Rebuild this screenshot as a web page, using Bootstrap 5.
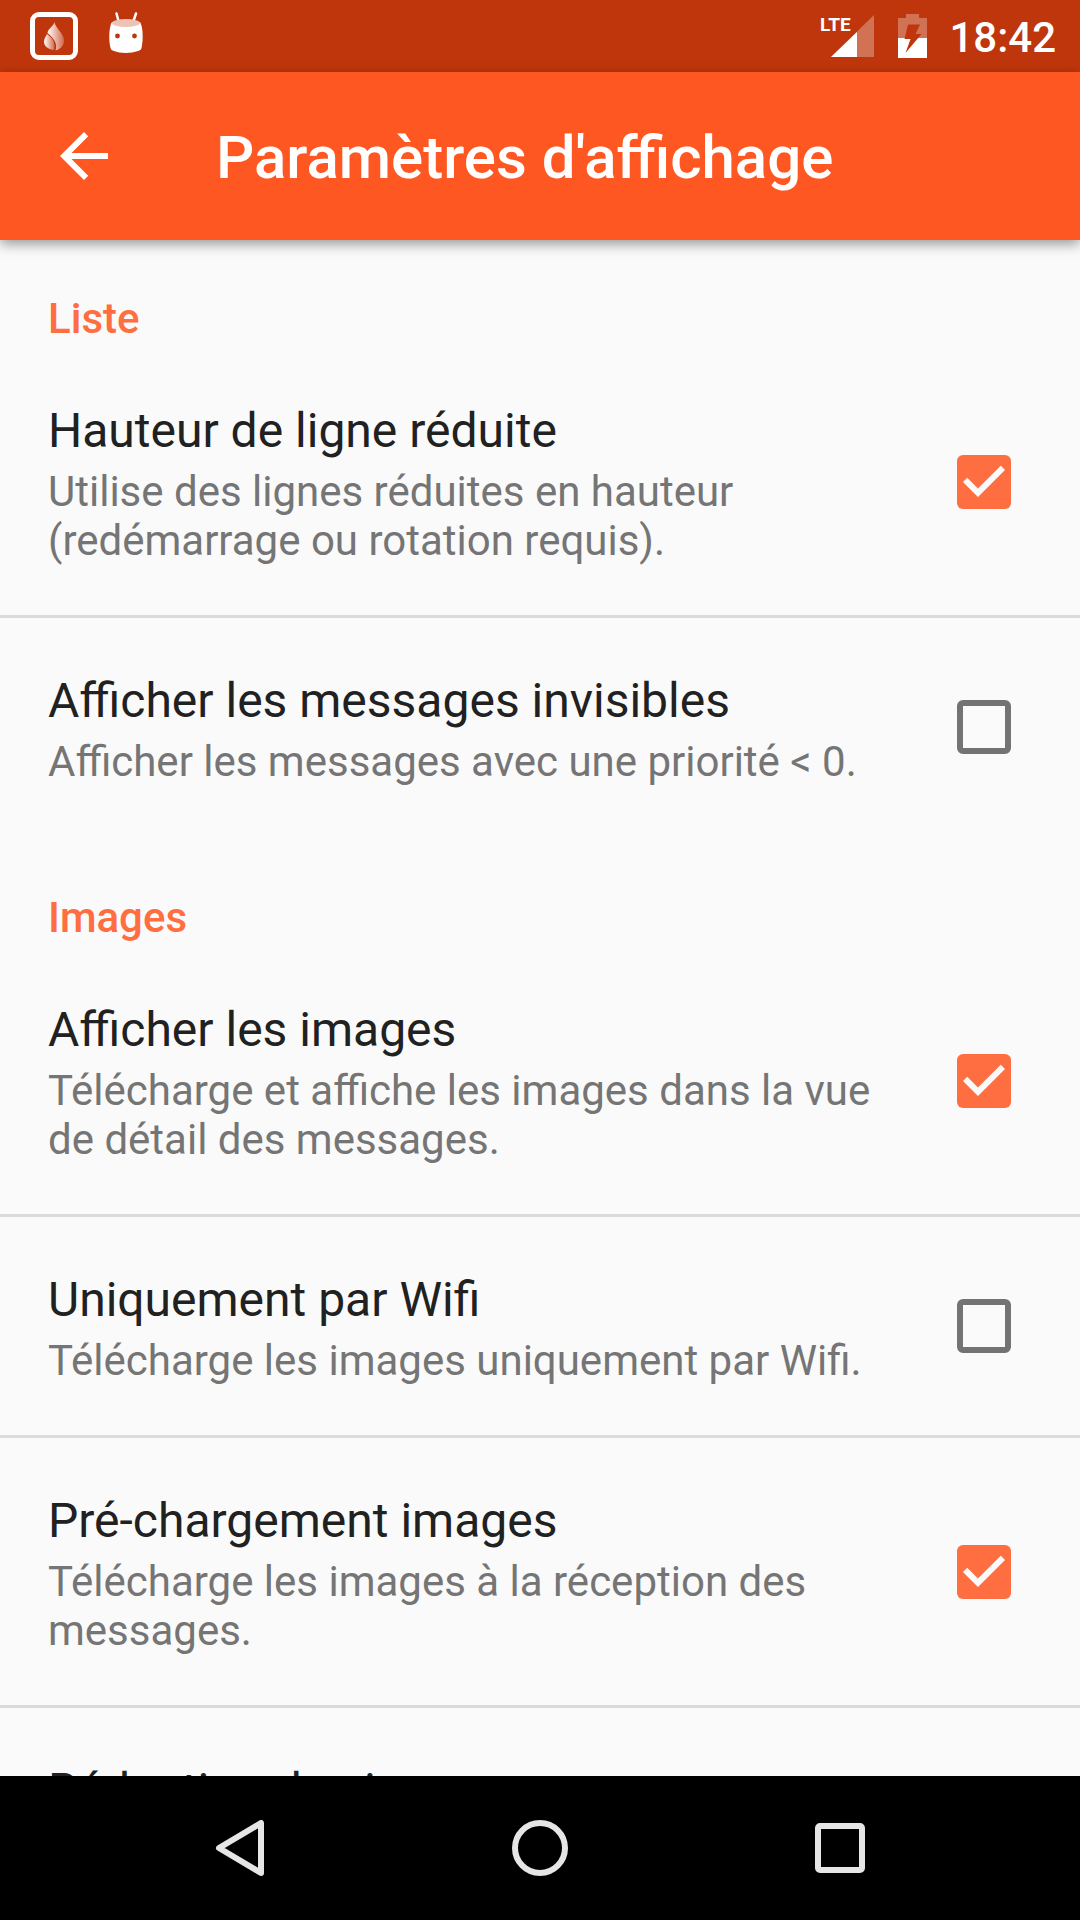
<!DOCTYPE html>
<html lang="fr">
<head>
<meta charset="utf-8">
<meta name="viewport" content="width=device-width, initial-scale=1">
<title>Paramètres d'affichage</title>
<link href="https://cdn.jsdelivr.net/npm/bootstrap@5.3.0/dist/css/bootstrap.min.css" rel="stylesheet">
<style>
  :root { --accent: #ff6e40; --ink: #212121; --ink-soft: #757575; }
  body { font-family: Roboto, "Liberation Sans", sans-serif; background: #fafafa; color: var(--ink); }
  svg { display: block; flex: none; }

  .status-bar { background: #bf360c; height: 72px; padding: 0 24px 0 30px; color: #fff; }
  .status-left { gap: 30px; }
  .status-right { gap: 22px; }
  .status-time { font-size: 42px; line-height: 48px; font-weight: 500; padding-top: 4px; }

  .app-bar { background: #ff5722; height: 168px; padding: 0 48px; gap: 96px; box-shadow: 0 4px 12px rgba(0, 0, 0, .4); }
  .app-title { font-size: 60px; line-height: 72px; font-weight: 500; padding-top: 4px; }

  .settings { scrollbar-width: none; }
  .settings::-webkit-scrollbar { display: none; }
  .group-title { font-size: 42px; line-height: 49px; font-weight: 500; color: var(--accent); padding: 54px 48px 5px; }
  .group + .group { padding-top: 3px; }
  .setting { padding: 50px 69px 50px 48px; gap: 72px; cursor: pointer; }
  .setting + .setting { border-top: 3px solid #dbdbdb; }
  .setting-name { font-size: 48px; line-height: 57px; padding-top: 4px; }
  .setting-note { font-size: 42px; line-height: 49px; color: var(--ink-soft); margin-top: 8px; }
  .setting .form-check-input { width: 54px; height: 54px; border: 6px solid #737373; border-radius: 6px; background-color: transparent; }
  .setting .form-check-input:checked {
    border: 0; background-color: var(--accent); background-size: 100% 100%;
    background-image: url("data:image/svg+xml,%3csvg xmlns='http://www.w3.org/2000/svg' viewBox='3 3 18 18'%3e%3cpath fill='%23fafafa' d='M10 17l-5-5 1.41-1.41L10 14.17l7.59-7.59L19 8z'/%3e%3c/svg%3e");
  }

  .nav-keys { background: #000; height: 144px; }
  .nav-key { flex: 0 1 300px; }
</style>
<script src="https://cdn.jsdelivr.net/npm/bootstrap@5.3.0/dist/js/bootstrap.bundle.min.js" defer></script>
</head>
<body class="vh-100 d-flex flex-column overflow-hidden">

<div class="status-bar d-flex align-items-center justify-content-between flex-shrink-0">
  <div class="status-left d-flex align-items-center">
    <svg width="48" height="48" viewBox="0 0 48 48" aria-hidden="true">
      <defs>
        <linearGradient id="flame" x1="0" y1="0" x2="1" y2="0">
          <stop offset="0" stop-color="#fff"/><stop offset="1" stop-color="#d2694a"/>
        </linearGradient>
      </defs>
      <rect x="2.5" y="2.5" width="43" height="43" rx="6.5" fill="none" stroke="#fff" stroke-width="5"/>
      <path fill="url(#flame)" d="M24.500 10C25 16 34 21 34 28.500C34 34 30 37.500 25.500 38.500C27.500 32 25 27.500 17.500 21C18 16.500 23.500 14.500 24.500 10Z"/>
      <path fill="url(#flame)" d="M17 22C22 26 26 30 24 38C18 37.500 14 34 14 29.500C14 26.500 16 24.500 17 22Z"/>
    </svg>
    <svg width="36" height="48" viewBox="0 0 36 48" aria-hidden="true">
      <path d="M8.500 1.500L10.500 9M28 1.500L25.500 9" stroke="#fff" stroke-width="2.500" stroke-linecap="round"/>
      <path fill="#fff" d="M4 10H32C35 14 35.500 28 33.500 36C33 38 32 38.500 30 39C23 41.500 12 41.500 6 39C4 38.500 3 38 2.500 36C.5 28 1 14 4 10Z"/>
      <ellipse cx="18" cy="11" rx="14" ry="4" fill="#ecc3b6"/>
      <circle cx="9.500" cy="24" r="2.400" fill="#bf360c"/><circle cx="26.500" cy="24" r="2.400" fill="#bf360c"/>
    </svg>
  </div>
  <div class="status-right d-flex align-items-center">
    <svg width="56" height="48" viewBox="0 0 56 48" role="img" aria-label="Réseau LTE">
      <path d="M54 3V45H11Z" fill="#fff" fill-opacity=".3"/>
      <path d="M37 20V45H11Z" fill="#fff"/>
      <text x="0" y="19" font-size="19" font-weight="700" fill="#fff">LTE</text>
    </svg>
    <svg width="29" height="48" viewBox="0 0 29 48" role="img" aria-label="Batterie en charge">
      <path fill="#fff" fill-opacity=".3" d="M8 2H21V6H29V26H0V6H8Z"/>
      <path fill="#fff" d="M0 26H29V46H0Z"/>
      <path fill="#bf360c" d="M10 12.500H22L17.500 22H23.500L7.500 41L12.500 27H6.500Z"/>
    </svg>
    <span class="status-time">18:42</span>
  </div>
</div>

<header class="app-bar d-flex align-items-center flex-shrink-0 position-relative z-1">
  <button type="button" class="btn p-0 border-0" aria-label="Retour">
    <svg width="72" height="72" viewBox="0 0 24 24" fill="#fff"><path d="M20 11H7.830l5.590-5.590L12 4l-8 8 8 8 1.410-1.410L7.830 13H20z"/></svg>
  </button>
  <h1 class="app-title text-white m-0">Paramètres d'affichage</h1>
</header>

<main class="settings flex-grow-1 overflow-auto">
  <section class="group">
    <h2 class="group-title m-0">Liste</h2>
    <label class="setting d-flex align-items-center" for="compact">
      <span class="flex-grow-1"><span class="setting-name d-block">Hauteur de ligne réduite</span>
      <span class="setting-note d-block">Utilise des lignes réduites en hauteur (redémarrage ou rotation requis).</span></span>
      <input class="form-check-input flex-shrink-0 m-0" type="checkbox" id="compact" checked>
    </label>
    <label class="setting d-flex align-items-center" for="hidden-messages">
      <span class="flex-grow-1"><span class="setting-name d-block">Afficher les messages invisibles</span>
      <span class="setting-note d-block">Afficher les messages avec une priorité &lt; 0.</span></span>
      <input class="form-check-input flex-shrink-0 m-0" type="checkbox" id="hidden-messages">
    </label>
  </section>
  <section class="group">
    <h2 class="group-title m-0">Images</h2>
    <label class="setting d-flex align-items-center" for="show-images">
      <span class="flex-grow-1"><span class="setting-name d-block">Afficher les images</span>
      <span class="setting-note d-block">Télécharge et affiche les images dans la vue de détail des messages.</span></span>
      <input class="form-check-input flex-shrink-0 m-0" type="checkbox" id="show-images" checked>
    </label>
    <label class="setting d-flex align-items-center" for="wifi-only">
      <span class="flex-grow-1"><span class="setting-name d-block">Uniquement par Wifi</span>
      <span class="setting-note d-block">Télécharge les images uniquement par Wifi.</span></span>
      <input class="form-check-input flex-shrink-0 m-0" type="checkbox" id="wifi-only">
    </label>
    <label class="setting d-flex align-items-center" for="preload">
      <span class="flex-grow-1"><span class="setting-name d-block">Pré-chargement images</span>
      <span class="setting-note d-block">Télécharge les images à la réception des messages.</span></span>
      <input class="form-check-input flex-shrink-0 m-0" type="checkbox" id="preload" checked>
    </label>
    <div class="setting d-flex align-items-center">
      <span class="setting-name">Réduction des images</span>
    </div>
  </section>
</main>

<nav class="nav-keys d-flex justify-content-center flex-shrink-0" aria-label="Navigation système">
  <button type="button" class="nav-key btn p-0 border-0 d-flex align-items-center justify-content-center" aria-label="Précédent">
    <svg width="56" height="56" viewBox="0 0 56 56" fill="none" stroke="#e6e6e6" stroke-width="6" stroke-linejoin="round"><path d="M49 3V53L7 28Z"/></svg>
  </button>
  <button type="button" class="nav-key btn p-0 border-0 d-flex align-items-center justify-content-center" aria-label="Accueil">
    <svg width="56" height="56" viewBox="0 0 56 56" fill="none" stroke="#e6e6e6" stroke-width="6"><circle cx="28" cy="28" r="25"/></svg>
  </button>
  <button type="button" class="nav-key btn p-0 border-0 d-flex align-items-center justify-content-center" aria-label="Applications récentes">
    <svg width="56" height="56" viewBox="0 0 56 56" fill="none" stroke="#e6e6e6" stroke-width="6"><rect x="6" y="6" width="44" height="44" rx="2"/></svg>
  </button>
</nav>
</body>
</html>
